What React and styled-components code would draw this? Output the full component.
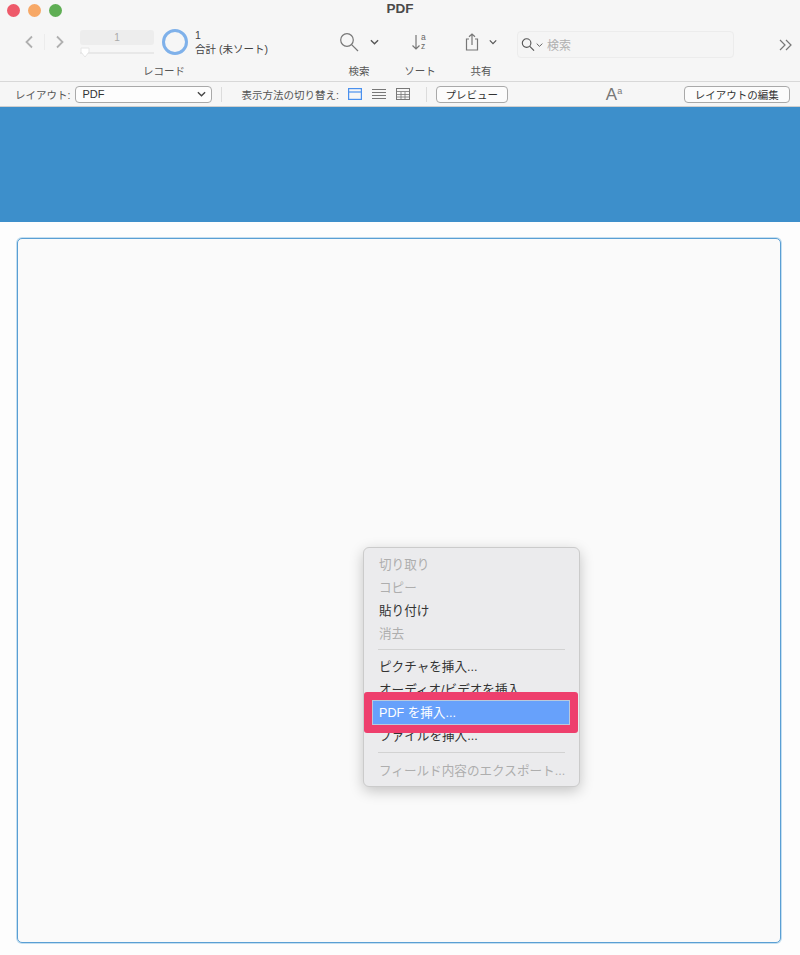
import React from 'react';
import styled, { createGlobalStyle } from 'styled-components';

const Global = createGlobalStyle`
  html, body { margin: 0; padding: 0; background: #fdfdfd; }
  body { font-family: "Liberation Sans", "Noto Sans CJK JP", sans-serif; color: #333; }
  * { box-sizing: border-box; }
`;
const Win = styled.div`
  position: relative; width: 800px; height: 955px; display: flex; flex-direction: column; overflow: hidden; background: #fdfdfd;
`;
const Toolbar = styled.header`
  height: 82px; background: #f6f6f6; border-bottom: 1px solid #d8d8d8; display: flex; flex-direction: column;
`;
const TitleRow = styled.div`
  height: 18px; display: grid; grid-template-columns: 1fr auto 1fr; align-items: center;
`;
const Lights = styled.div`display: flex; gap: 8px; padding: 3px 0 0 7px;`;
const Light = styled.span`
  width: 13px; height: 13px; border-radius: 50%; background: ${p => p.$c}; display: block;
`;
const Title = styled.div`font-size: 13.5px; font-weight: 700; color: #4a4a4a; line-height: 16px;`;
const Tools = styled.div`display: flex; padding: 6px 0 0 20px; flex: 1;`;
const Group = styled.div`
  width: ${p => p.$w}px; margin-right: ${p => p.$mr || 0}px; display: flex; flex-direction: column; align-items: center;
`;
const GroupBody = styled.div`
  height: 36px; width: 100%; display: flex; align-items: center; justify-content: ${p => p.$j || 'center'}; gap: ${p => p.$gap || 0}px;
`;
const GroupLabel = styled.div`font-size: 10.5px; color: #555; line-height: 14px; margin-top: 4px;`;
const Nav = styled.div`display: flex; align-items: center; width: 56px; margin-left: 4px;`;
const NavDivider = styled.span`width: 1px; height: 16px; background: #ececec; margin: 0 10px 0 10px;`;
const Stepper = styled.div`width: 74px; display: flex; flex-direction: column;`;
const RecField = styled.div`
  height: 15px; border-radius: 3px; background: #ededed; color: #aaa; font-size: 10px; line-height: 15px; text-align: center;
`;
const Track = styled.div`position: relative; height: 2px; margin-top: 7px; background: #e8e8e8;`;
const Thumb = styled.svg`position: absolute; left: 0; top: -5px;`;
const Ring = styled.div`
  width: 26px; height: 26px; margin-left: 8px; border-radius: 50%; border: 3px solid #7fb1ea;
`;
const RecInfo = styled.div`margin-left: 7px; font-size: 10.5px; line-height: 14px; color: #444;`;
const Search = styled.div`
  width: 217px; height: 27px; margin-top: 7px; border: 1px solid #ececec; border-radius: 4px; background: #f5f5f5;
  display: flex; align-items: center; padding-left: 3px; gap: 1px; font-size: 12px; color: #b0b0b0;
`;
const SearchText = styled.span`margin-left: 3px;`;
const Overflow = styled.div`margin: 7px 0 0 45px; height: 27px; display: flex; align-items: center;`;
const FormatBar = styled.div`
  height: 25px; background: #f6f6f6; display: flex; align-items: center; padding: 0 10px 0 15px; border-bottom: 1px solid #cfcfcf;
  font-size: 10.5px; color: #555;
`;
const FieldLabel = styled.span`white-space: nowrap;`;
const SelectBox = styled.div`
  width: 137px; height: 17px; margin-left: 5px; background: #fdfdfd; border: 1px solid #a9a9a9; border-radius: 4px;
  display: flex; align-items: center; justify-content: space-between; padding: 0 5px 0 6px; color: #333; font-size: 11px;
`;
const VSep = styled.span`width: 1px; height: 15px; background: #dcdcdc; margin: 0 ${p => p.$r}px 0 ${p => p.$l}px;`;
const ViewIcons = styled.div`display: flex; gap: 10px; margin-left: 9px;`;
const Btn = styled.div`
  height: 17px; width: ${p => p.$w}px; border: 1px solid #a9a9a9; border-radius: 4px; background: #fcfcfc; color: #333;
  display: flex; align-items: center; justify-content: center; font-size: 10.5px; white-space: nowrap;
`;
const FontIcon = styled.div`
  width: 16px; margin: 0 62px 0 98px; font-size: 17px; color: #777; line-height: 17px; display: flex;
  sup { font-size: 9px; line-height: 10px; margin: 0; vertical-align: top; }
`;
const Banner = styled.div`height: 115px; background: #3d8fcb;`;
const Body = styled.main`flex: 1; padding: 16px 19px 12px 17px; display: flex;`;
const Panel = styled.div`
  flex: 1; background: #fafafa; border: 1px solid #5a9fd4; border-radius: 5px; box-shadow: 0 0 0 1px rgba(91,165,216,.35);
`;
const Menu = styled.div`
  position: absolute; left: 363px; top: 547px; width: 217px; height: 240px; background: #ebebed; border: 1px solid #cbcbcb;
  border-radius: 6px; box-shadow: 0 4px 14px rgba(0,0,0,.22); padding: 6px 0 0; font-size: 12.6px;
`;
const Item = styled.div`
  height: 23px; line-height: 23px; padding-left: 15px; white-space: nowrap; color: ${p => p.$off ? '#aeaeae' : '#333'};
`;
const MenuSep = styled.div`
  height: 1px; margin: ${p => p.$wide ? '4px 14px 7px' : '3px 14px 6px'}; background: #d2d2d2;
`;
const Highlight = styled.div`
  position: absolute; left: 364px; top: 692px; width: 214px; height: 41px; background: #ee3f6d; border-radius: 3px; padding: 8px 8px;
`;
const HighlightInner = styled.div`
  height: 25px; background: #67a1fb; border: 1px solid #b9c9dc; color: #fff; font-size: 12.6px; line-height: 25px; padding-left: 6px;
`;

const stroke = { fill: 'none', stroke: '#777', strokeWidth: 1.2 };
const Chevron = ({ w = 10, c = '#555', sw = 1.5 }) => (
  <svg width={w} height="6" viewBox="0 0 10 6"><path d="M1 1l4 4 4-4" fill="none" stroke={c} strokeWidth={sw} /></svg>
);

export default function App() {
  return (
    <Win>
      <Global />
      <Toolbar>
        <TitleRow>
          <Lights>
            <Light $c="#ee5a6a" /><Light $c="#f7a866" /><Light $c="#5fae54" />
          </Lights>
          <Title>PDF</Title>
          <span />
        </TitleRow>
        <Tools>
          <Group $w={288} $mr={26}>
            <GroupBody $j="flex-start">
              <Nav>
                <svg width="10" height="14" viewBox="0 0 10 14"><path d="M8 1.5L2.5 7 8 12.5" fill="none" stroke="#b0b0b0" strokeWidth="1.8" /></svg>
                <NavDivider />
                <svg width="10" height="14" viewBox="0 0 10 14"><path d="M2 1.5L7.5 7 2 12.5" fill="none" stroke="#b0b0b0" strokeWidth="1.8" /></svg>
              </Nav>
              <Stepper>
                <RecField>1</RecField>
                <Track>
                  <Thumb width="10" height="12" viewBox="0 0 10 12"><path d="M1 1h8v4l-4 5-4-5z" fill="#fff" stroke="#e6e6e6" /></Thumb>
                </Track>
              </Stepper>
              <Ring />
              <RecInfo>1<br />合計 (未ソート)</RecInfo>
            </GroupBody>
            <GroupLabel>レコード</GroupLabel>
          </Group>
          <Group $w={50} $mr={11}>
            <GroupBody $gap={11}>
              <svg width="20" height="20" viewBox="0 0 20 20"><circle cx="8" cy="8" r="6.3" {...stroke} /><path d="M12.6 12.6L19 19" {...stroke} /></svg>
              <Chevron w={9} />
            </GroupBody>
            <GroupLabel>検索</GroupLabel>
          </Group>
          <Group $w={50} $mr={11}>
            <GroupBody>
              <svg width="20" height="20" viewBox="0 0 20 20">
                <path d="M6 3v14M2.5 13.5L6 17l3.5-3.5" {...stroke} />
                <text x="11" y="8" fontSize="8.5" fill="#666" fontFamily="Liberation Sans">a</text>
                <text x="11" y="17" fontSize="8.5" fill="#666" fontFamily="Liberation Sans">z</text>
              </svg>
            </GroupBody>
            <GroupLabel>ソート</GroupLabel>
          </Group>
          <Group $w={50} $mr={11}>
            <GroupBody $gap={10}>
              <svg width="14" height="18" viewBox="0 0 14 18">
                <path d="M4 6H1.5v11h11V6H10M7 12V1M4 3.8L7 1l3 2.8" {...stroke} />
              </svg>
              <Chevron w={8} />
            </GroupBody>
            <GroupLabel>共有</GroupLabel>
          </Group>
          <Search>
            <svg width="14" height="15" viewBox="0 0 15 15"><circle cx="6" cy="6" r="4.6" fill="none" stroke="#555" strokeWidth="1.2" /><path d="M9.4 9.4L14 14" fill="none" stroke="#555" strokeWidth="1.2" /></svg>
            <Chevron w={7} sw={1.3} />
            <SearchText>検索</SearchText>
          </Search>
          <Overflow>
            <svg width="14" height="12" viewBox="0 0 14 12"><path d="M1 1l5 5-5 5M7 1l5 5-5 5" fill="none" stroke="#777" strokeWidth="1.2" /></svg>
          </Overflow>
        </Tools>
      </Toolbar>
      <FormatBar>
        <FieldLabel>レイアウト:</FieldLabel>
        <SelectBox>PDF<Chevron w={9} c="#444" /></SelectBox>
        <VSep $l={9} $r={19} />
        <FieldLabel>表示方法の切り替え:</FieldLabel>
        <ViewIcons>
          <svg width="14" height="12" viewBox="0 0 14 12"><rect x=".6" y=".6" width="12.8" height="10.8" fill="none" stroke="#4a90ee" strokeWidth="1.2" /><path d="M1 4h12" stroke="#4a90ee" strokeWidth="1.2" /></svg>
          <svg width="14" height="12" viewBox="0 0 14 12"><path d="M0 1.5h14M0 4.5h14M0 7.5h14M0 10.5h14" stroke="#777" /></svg>
          <svg width="14" height="12" viewBox="0 0 14 12"><rect x=".5" y=".5" width="13" height="11" fill="none" stroke="#777" /><path d="M1 3.5h12M1 6.5h12M1 9h12M5 4v7M9 4v7" stroke="#777" strokeWidth=".8" /></svg>
        </ViewIcons>
        <VSep $l={16} $r={9} />
        <Btn $w={72}>プレビュー</Btn>
        <FontIcon>A<sup>a</sup></FontIcon>
        <Btn $w={106}>レイアウトの編集</Btn>
      </FormatBar>
      <Banner />
      <Body><Panel /></Body>
      <Menu>
        <Item $off>切り取り</Item>
        <Item $off>コピー</Item>
        <Item>貼り付け</Item>
        <Item $off>消去</Item>
        <MenuSep />
        <Item>ピクチャを挿入...</Item>
        <Item>オーディオ/ビデオを挿入...</Item>
        <Item>PDF を挿入...</Item>
        <Item>ファイルを挿入...</Item>
        <MenuSep $wide />
        <Item $off>フィールド内容のエクスポート...</Item>
      </Menu>
      <Highlight><HighlightInner>PDF を挿入...</HighlightInner></Highlight>
    </Win>
  );
}
